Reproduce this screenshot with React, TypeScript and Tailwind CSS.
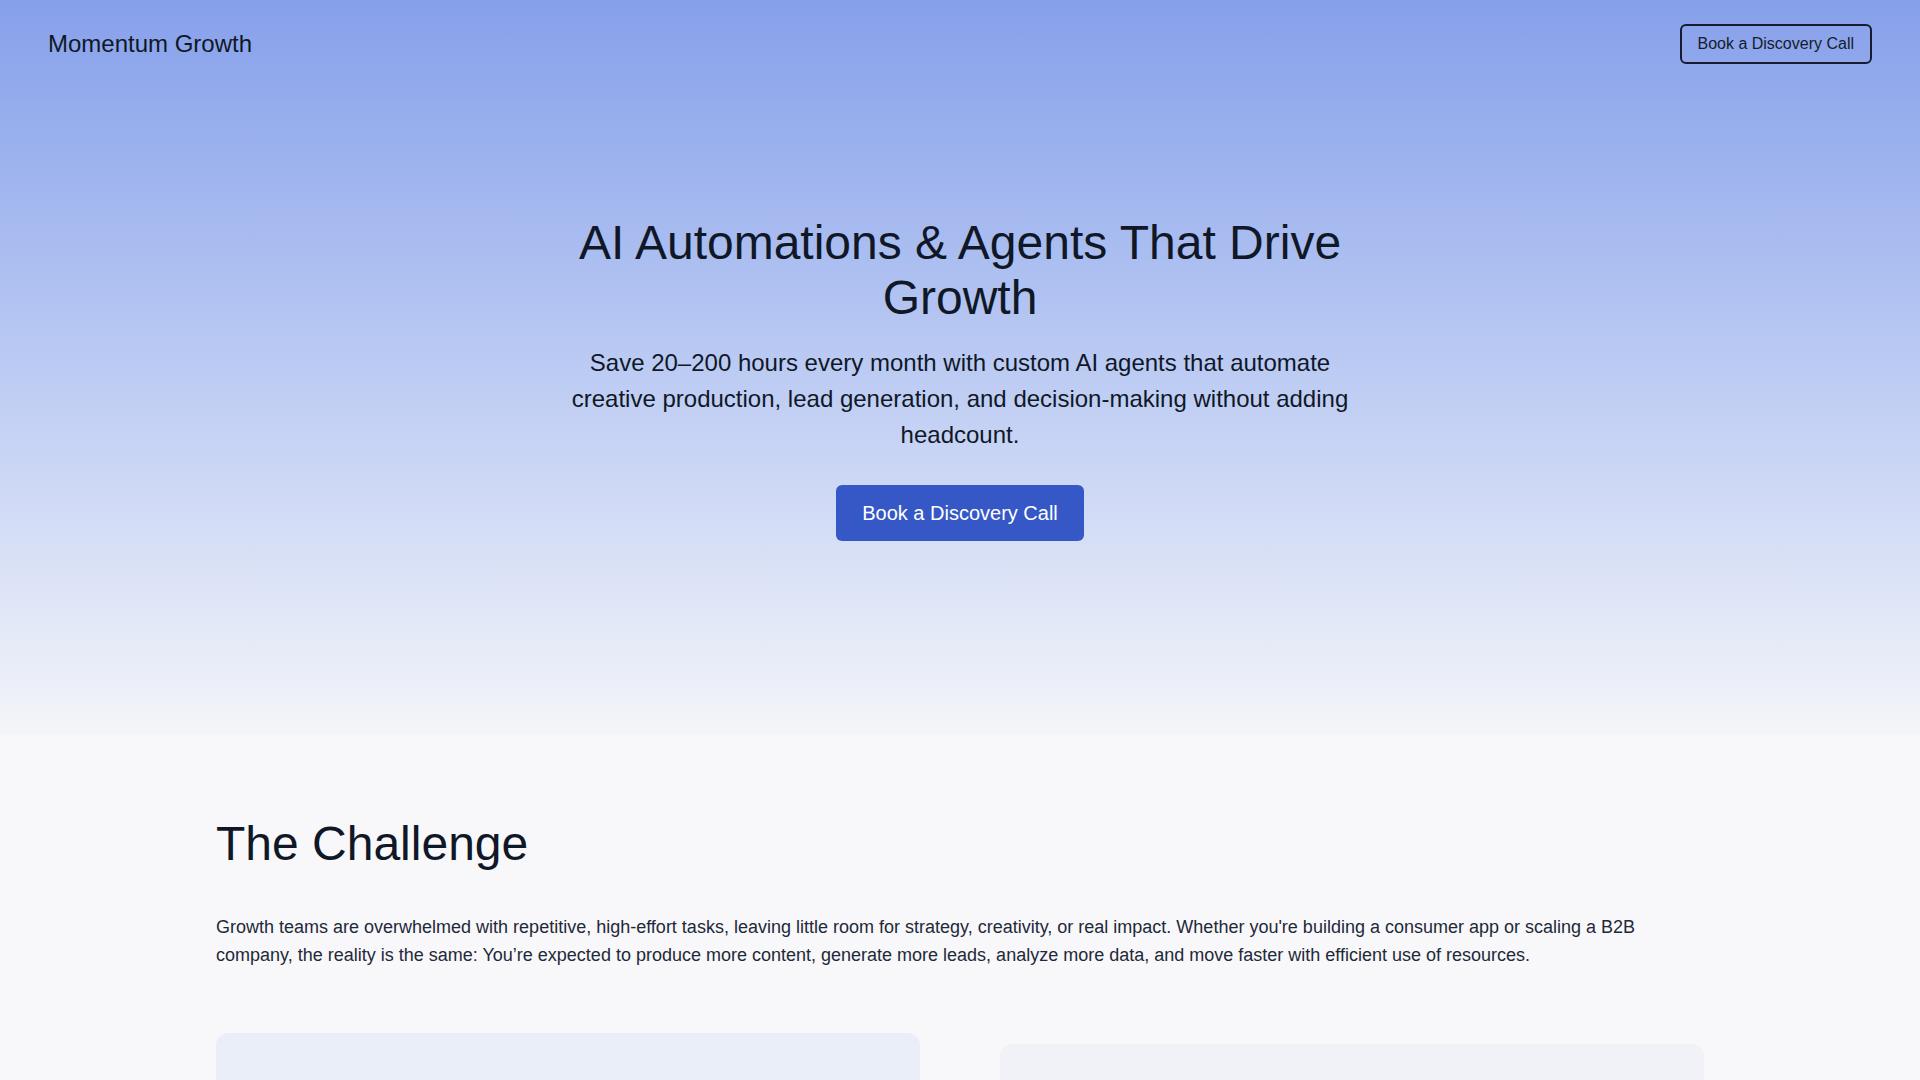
const challengeText =
  "Growth teams are overwhelmed with repetitive, high-effort tasks, leaving little room for strategy, creativity, or real impact. Whether you're building a consumer app or scaling a B2B company, the reality is the same: You\u2019re expected to produce more content, generate more leads, analyze more data, and move faster with efficient use of resources.";

function Header() {
  return (
    <header className="flex items-center justify-between px-12 py-6">
      <span className="text-2xl text-gray-900">Momentum Growth</span>
      <a
        href="#book"
        className="rounded-md border-2 border-[#161b2e] px-4 py-1.5 text-base text-[#161b2e]"
      >
        Book a Discovery Call
      </a>
    </header>
  );
}

function Hero() {
  return (
    <section className="flex h-[735px] flex-col bg-gradient-to-b from-[#86a0ea] to-[#f4f5f9]">
      <Header />
      <div className="mx-auto flex max-w-[780px] flex-col items-center pt-[127px] text-center">
        <h1 className="mb-5 max-w-3xl text-5xl leading-[1.15] text-gray-900">
          AI Automations &amp; Agents That Drive Growth
        </h1>
        <p className="text-2xl leading-9 text-gray-900">
          Save 20–200 hours every month with custom AI agents that automate creative production, lead
          generation, and decision-making without adding headcount.
        </p>
        <a
          href="#book"
          className="mt-8 rounded-md bg-[#3558c6] px-[26px] py-3.5 text-xl text-white"
        >
          Book a Discovery Call
        </a>
      </div>
    </section>
  );
}

function Challenge() {
  return (
    <section className="pt-20 pb-24">
      <div className="mx-auto max-w-[1488px]">
        <h2 className="mb-10 text-5xl leading-[1.2] text-gray-900">The Challenge</h2>
        <p className="text-lg leading-7 text-gray-800">{challengeText}</p>
        <div className="mt-16 grid grid-cols-2 items-start gap-20">
          <div className="h-[360px] rounded-xl bg-[#eaeef8]" />
          <div className="mt-[11px] h-[360px] rounded-xl bg-[#f0f2f8]" />
        </div>
      </div>
    </section>
  );
}

export default function App() {
  return (
    <div className="min-h-screen bg-[#f8f8fa] font-['Liberation_Sans',Arial,sans-serif]">
      <Hero />
      <Challenge />
    </div>
  );
}
